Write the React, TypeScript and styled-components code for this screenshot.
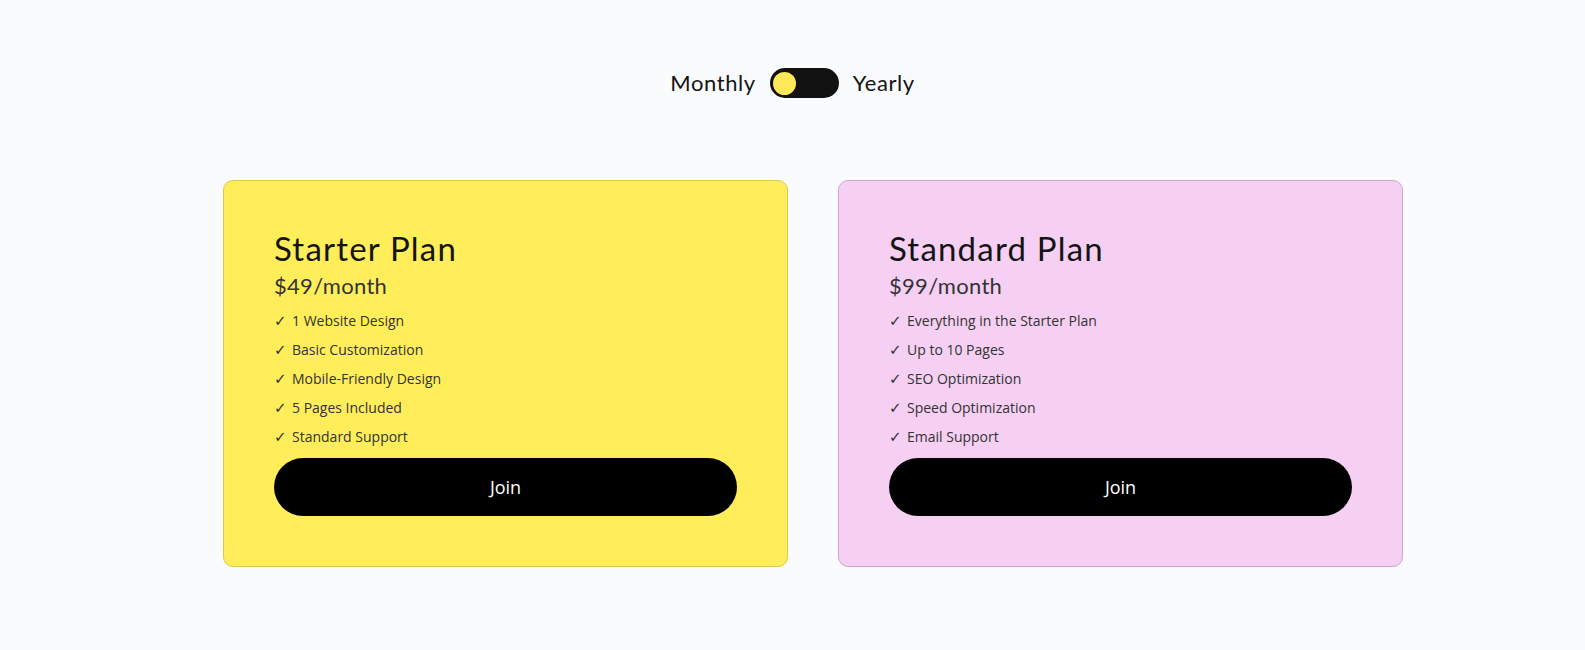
import React, { useState } from "react";
import styled, { createGlobalStyle } from "styled-components";

const GlobalStyle = createGlobalStyle`
  html, body {
    margin: 0;
    padding: 0;
    background: #fafbfd;
  }
  * {
    box-sizing: border-box;
  }
`;

const Page = styled.div`
  min-height: 650px;
  padding-top: 66px;
  font-family: Lato, "Noto Sans", sans-serif;
  color: #141414;
`;

const ToggleRow = styled.div`
  display: flex;
  align-items: center;
  justify-content: center;
  gap: 14px;
  height: 34px;
`;

const ToggleLabel = styled.span`
  font-size: 22px;
  line-height: 34px;
  letter-spacing: 0.6px;
  color: #141414;
`;

const Switch = styled.button<{ $on: boolean }>`
  position: relative;
  width: 69px;
  height: 30px;
  border: none;
  border-radius: 15px;
  background: #121212;
  padding: 0;
  cursor: pointer;

  &::after {
    content: "";
    position: absolute;
    top: 3.5px;
    left: ${(p) => (p.$on ? "42.5px" : "3.5px")};
    width: 23px;
    height: 23px;
    border-radius: 50%;
    background: #ffe95a;
    transition: left 0.2s;
  }
`;

const Cards = styled.div`
  display: flex;
  justify-content: center;
  gap: 50px;
  margin-top: 80px;
  padding-left: 41px;
`;

const Card = styled.div<{ $bg: string; $border: string }>`
  width: 565px;
  padding: 50px;
  border: 1px solid ${(p) => p.$border};
  border-radius: 10px;
  background: ${(p) => p.$bg};
`;

const Title = styled.h2`
  margin: 0;
  font-size: 33px;
  font-weight: 400;
  line-height: 34px;
  letter-spacing: 1.2px;
  color: #141414;
`;

const Price = styled.div`
  margin-top: 6px;
  font-size: 22px;
  line-height: 30px;
  letter-spacing: 0.3px;
  color: #333;
`;

const Features = styled.ul`
  display: flex;
  flex-direction: column;
  gap: 8px;
  list-style: none;
  margin: 9px 0 0;
  padding: 0;
  font-family: "Open Sans", "Noto Sans", sans-serif;
  font-size: 14px;
  color: #333;
`;

const Feature = styled.li`
  height: 21px;
  line-height: 21px;

  &::before {
    content: "✓";
    display: inline-block;
    width: 18px;
    line-height: 21px;
    font-family: "DejaVu Sans", sans-serif;
    font-size: 15px;
  }
`;

const JoinButton = styled.button`
  display: block;
  width: 100%;
  height: 58px;
  margin-top: 10.5px;
  border: none;
  border-radius: 29px;
  background: #000;
  color: #fff;
  font-family: "Open Sans", "Noto Sans", sans-serif;
  font-size: 18px;
  cursor: pointer;
`;

interface Plan {
  name: string;
  monthly: number;
  features: string[];
  bg: string;
  border: string;
}

const plans: Plan[] = [
  {
    name: "Starter Plan",
    monthly: 49,
    features: [
      "1 Website Design",
      "Basic Customization",
      "Mobile-Friendly Design",
      "5 Pages Included",
      "Standard Support",
    ],
    bg: "#ffee5a",
    border: "#dccb4a",
  },
  {
    name: "Standard Plan",
    monthly: 99,
    features: [
      "Everything in the Starter Plan",
      "Up to 10 Pages",
      "SEO Optimization",
      "Speed Optimization",
      "Email Support",
    ],
    bg: "#f5d0f3",
    border: "#d3a6d0",
  },
];

const App: React.FC = () => {
  const [yearly, setYearly] = useState(false);

  return (
    <Page>
      <GlobalStyle />
      <ToggleRow>
        <ToggleLabel>Monthly</ToggleLabel>
        <Switch $on={yearly} onClick={() => setYearly(!yearly)} aria-label="Billing period" />
        <ToggleLabel>Yearly</ToggleLabel>
      </ToggleRow>

      <Cards>
        {plans.map((plan) => (
          <Card key={plan.name} $bg={plan.bg} $border={plan.border}>
            <Title>{plan.name}</Title>
            <Price>
              {yearly ? `$${plan.monthly * 10}/year` : `$${plan.monthly}/month`}
            </Price>
            <Features>
              {plan.features.map((f) => (
                <Feature key={f}>{f}</Feature>
              ))}
            </Features>
            <JoinButton>Join</JoinButton>
          </Card>
        ))}
      </Cards>
    </Page>
  );
};

export default App;
